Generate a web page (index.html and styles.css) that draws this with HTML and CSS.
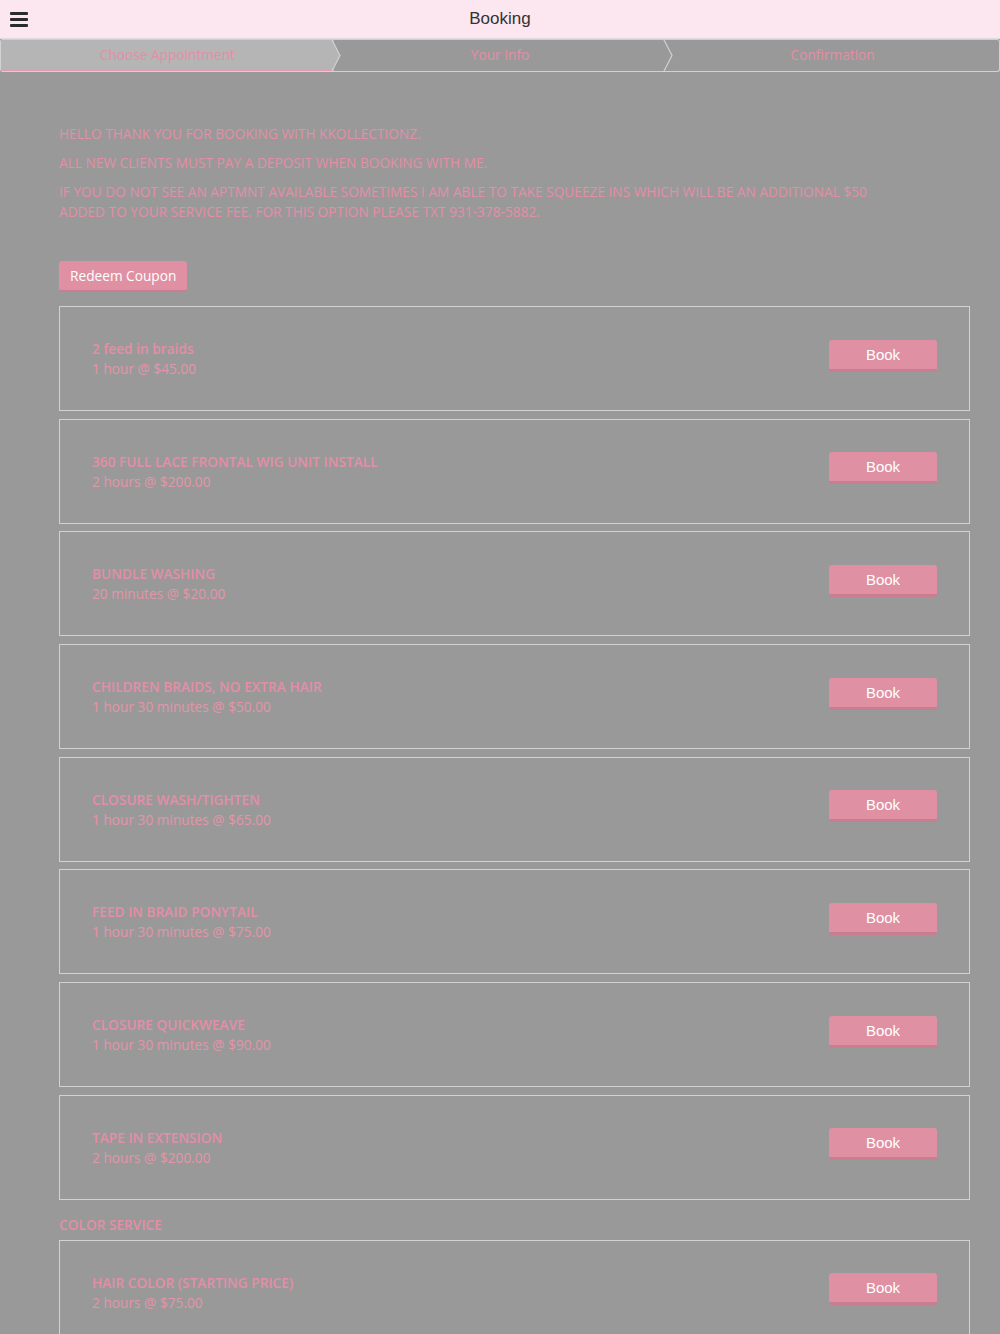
FILE: index.html
```html
<!DOCTYPE html>
<html>
<head>
<meta charset="utf-8">
<title>Booking</title>
<link rel="stylesheet" href="styles.css">
</head>
<body>
<header class="topbar">
  <button class="menu" aria-label="Menu">
    <svg width="18" height="15" viewBox="0 0 18 15"><rect x="0" y="0" width="18" height="3" rx="1" fill="#2b2b2b"/><rect x="0" y="6" width="18" height="3" rx="1" fill="#2b2b2b"/><rect x="0" y="12" width="18" height="3" rx="1" fill="#2b2b2b"/></svg>
  </button>
  <h1 class="title">Booking</h1>
</header>

<nav class="steps">
  <div class="step active">Choose Appointment
    <svg class="chev" width="12" height="34" viewBox="0 0 12 34"><polygon points="0,0 9,16.5 0,33" fill="#b5b5b5"/><polyline points="0.5,0 9,16.5 0.5,33" fill="none" stroke="#d2d2d2" stroke-width="1.2"/></svg>
  </div>
  <div class="step">Your Info
    <svg class="chev" width="12" height="34" viewBox="0 0 12 34"><polyline points="0.5,0 9,16.5 0.5,33" fill="none" stroke="#d2d2d2" stroke-width="1.2"/></svg>
  </div>
  <div class="step">Confirmation</div>
</nav>

<main class="content">
  <div class="intro">
    <p>HELLO THANK YOU FOR BOOKING WITH KKOLLECTIONZ.</p>
    <p>ALL NEW CLIENTS MUST PAY A DEPOSIT WHEN BOOKING WITH ME.</p>
    <p>IF YOU DO NOT SEE AN APTMNT AVAILABLE SOMETIMES I AM ABLE TO TAKE SQUEEZE INS WHICH WILL BE AN ADDITIONAL $50 ADDED TO YOUR SERVICE FEE. FOR THIS OPTION PLEASE TXT 931-378-5882.</p>
  </div>

  <button class="coupon">Redeem Coupon</button>

  <div class="list">
    <div class="card"><div class="info"><div class="name">2 feed in braids</div><div class="meta">1 hour @ $45.00</div></div><button class="book">Book</button></div>
    <div class="card"><div class="info"><div class="name">360 FULL LACE FRONTAL WIG UNIT INSTALL</div><div class="meta">2 hours @ $200.00</div></div><button class="book">Book</button></div>
    <div class="card"><div class="info"><div class="name">BUNDLE WASHING</div><div class="meta">20 minutes @ $20.00</div></div><button class="book">Book</button></div>
    <div class="card"><div class="info"><div class="name">CHILDREN BRAIDS, NO EXTRA HAIR</div><div class="meta">1 hour 30 minutes @ $50.00</div></div><button class="book">Book</button></div>
    <div class="card"><div class="info"><div class="name">CLOSURE WASH/TIGHTEN</div><div class="meta">1 hour 30 minutes @ $65.00</div></div><button class="book">Book</button></div>
    <div class="card"><div class="info"><div class="name">FEED IN BRAID PONYTAIL</div><div class="meta">1 hour 30 minutes @ $75.00</div></div><button class="book">Book</button></div>
    <div class="card"><div class="info"><div class="name">CLOSURE QUICKWEAVE</div><div class="meta">1 hour 30 minutes @ $90.00</div></div><button class="book">Book</button></div>
    <div class="card"><div class="info"><div class="name">TAPE IN EXTENSION</div><div class="meta">2 hours @ $200.00</div></div><button class="book">Book</button></div>
  </div>

  <h2 class="category">COLOR SERVICE</h2>
  <div class="list">
    <div class="card"><div class="info"><div class="name">HAIR COLOR (STARTING PRICE)</div><div class="meta">2 hours @ $75.00</div></div><button class="book">Book</button></div>
  </div>
</main>
</body>
</html>
```

FILE: styles.css
```css
* { box-sizing: border-box; }
html, body { margin: 0; padding: 0; }
body {
  background: #999999;
  font-family: "Open Sans", "Noto Sans", sans-serif;
  font-size: 13.7px;
  color: #e48ea7;
  min-height: 1334px;
}
.topbar {
  height: 39px;
  background: #fce6ef;
  border-bottom: 1px solid #dcdcdc;
  display: flex;
  align-items: center;
  justify-content: center;
  position: relative;
}
.menu {
  position: absolute;
  left: 10px;
  top: 12px;
  border: 0;
  padding: 0;
  background: none;
  display: flex;
}
.title {
  margin: 0;
  font-family: "Liberation Sans", Arial, sans-serif;
  font-weight: 400;
  font-size: 17px;
  color: #333333;
  line-height: 38px;
}
.steps {
  display: flex;
  height: 33px;
  border: 1px solid #d2d2d2;
  border-top-color: #cfcfcf;
  border-radius: 3px;
}
.step {
  flex: 1;
  position: relative;
  display: flex;
  align-items: center;
  justify-content: center;
  font-size: 13.7px;
  color: #e48ea7;
  padding-bottom: 2px;
}
.step.active {
  background: #b5b5b5;
  border-bottom: 2px solid #e79bb0;
  border-radius: 2px 0 0 2px;
  padding-bottom: 0;
}
.chev {
  position: absolute;
  right: -9px;
  top: -1px;
  z-index: 2;
}
.content {
  padding: 52px 30px 0 59px;
}
.intro { max-width: 845px; }
.intro p {
  margin: 0 0 9px;
  line-height: 20px;
}
.coupon {
  margin-top: 30px;
  height: 31px;
  padding: 0 11px;
  background: #e090a3;
  color: #ffffff;
  border: 0;
  border-bottom: 2px solid #c97d90;
  border-radius: 3px;
  font-family: "Open Sans", sans-serif;
  font-size: 13.7px;
  line-height: 29px;
}
.list {
  display: flex;
  flex-direction: column;
  gap: 7.7px;
  margin-top: 14px;
}
.card {
  height: 105px;
  border: 1px solid #d2d2d2;
  display: flex;
  align-items: center;
  justify-content: space-between;
  padding: 0 32px;
  width: 911px;
}
.info { line-height: 20px; padding-top: 1px; }
.name { font-weight: 600; }
.meta { font-weight: 400; color: #e395aa; }
.book {
  width: 108px;
  height: 32px;
  background: #e090a3;
  color: #ffffff;
  border: 0;
  border-bottom: 3px solid #c97d90;
  border-radius: 3px;
  font-family: "Liberation Sans", Arial, sans-serif;
  font-size: 15px;
  margin-top: -6px;
  padding: 0;
}
.category {
  margin: 15px 0 0;
  font-size: 13.7px;
  font-weight: 600;
  line-height: 20px;
}
.category + .list { margin-top: 5px; }
```
